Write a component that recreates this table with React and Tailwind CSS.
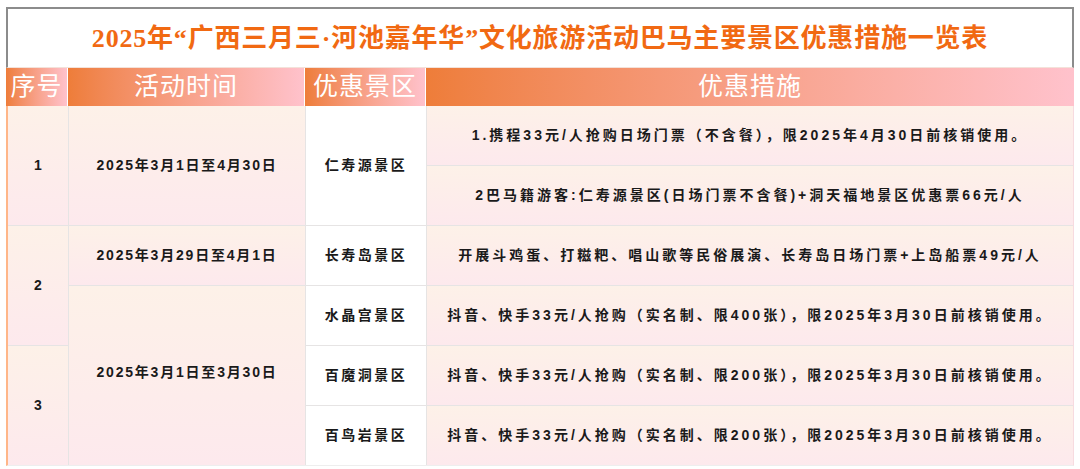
const headers = ["序号", "活动时间", "优惠景区", "优惠措施"];

const cellGrad = "bg-gradient-to-b from-[#fdf1e8] to-[#fde9ed]";
const bodyText =
  "flex items-center justify-center text-[14px] font-bold text-[#1a1a1a]";

const offers = [
  { row: "row-start-1", spot: "仁寿源景区", text: "1.携程33元/人抢购日场门票（不含餐），限2025年4月30日前核销使用。", spotRows: "row-span-2" },
  { row: "row-start-2", text: "2巴马籍游客:仁寿源景区(日场门票不含餐)+洞天福地景区优惠票66元/人" },
  { row: "row-start-3", spot: "长寿岛景区", text: "开展斗鸡蛋、打糍粑、唱山歌等民俗展演、长寿岛日场门票+上岛船票49元/人" },
  { row: "row-start-4", spot: "水晶宫景区", text: "抖音、快手33元/人抢购（实名制、限400张），限2025年3月30日前核销使用。" },
  { row: "row-start-5", spot: "百魔洞景区", text: "抖音、快手33元/人抢购（实名制、限200张），限2025年3月30日前核销使用。" },
  { row: "row-start-6", spot: "百鸟岩景区", text: "抖音、快手33元/人抢购（实名制、限200张），限2025年3月30日前核销使用。" },
];

export default function App() {
  return (
    <div
      className="w-[1080px] h-[469px] bg-white pt-[7px] pl-[6px] pr-[6px]"
      style={{ fontFamily: '"Liberation Sans", "Noto Sans CJK SC", sans-serif' }}
    >
      <div className="flex h-[61px] items-center justify-center border-2 border-b border-[#8c8c8c] border-b-[#f3e2da] bg-white">
        <h1
          className="text-[26px] font-bold tracking-[0.8px] text-[#f16912]"
          style={{ fontFamily: '"Liberation Serif", "Noto Sans CJK SC", serif' }}
        >
          2025年“广西三月三·河池嘉年华”文化旅游活动巴马主要景区优惠措施一览表
        </h1>
      </div>

      <div className="grid h-[38px] grid-cols-[61px_236px_120px_1fr] gap-x-px bg-white">
        {headers.map((h) => (
          <div
            key={h}
            className="flex items-center justify-center bg-gradient-to-r from-[#ee7d39] to-[#ffc2cc] text-[25px] tracking-[1px] text-white"
          >
            {h}
          </div>
        ))}
      </div>

      <div className="grid grid-cols-[60px_236px_120px_1fr] grid-rows-[repeat(6,59px)] gap-px border-l-2 border-r border-b border-l-[#ffb688] border-r-[#f7dbe0] border-b-[#eee] bg-[#e6e4e4]">
        <div className={`${cellGrad} ${bodyText} col-start-1 row-start-1 row-span-2`}>1</div>
        <div className={`${cellGrad} ${bodyText} col-start-1 row-start-3 row-span-2`}>2</div>
        <div className={`${cellGrad} ${bodyText} col-start-1 row-start-5 row-span-2`}>3</div>

        <div className={`${cellGrad} ${bodyText} tracking-[1.8px] col-start-2 row-start-1 row-span-2`}>2025年3月1日至4月30日</div>
        <div className={`${cellGrad} ${bodyText} tracking-[1.8px] col-start-2 row-start-3`}>2025年3月29日至4月1日</div>
        <div className={`${cellGrad} ${bodyText} tracking-[1.8px] col-start-2 row-start-4 row-span-3 pb-[6px]`}>2025年3月1日至3月30日</div>

        {offers.map((o) =>
          o.spot ? (
            <div key={o.spot} className={`bg-white ${bodyText} tracking-[2.5px] col-start-3 ${o.row} ${o.spotRows || ""}`}>
              {o.spot}
            </div>
          ) : null
        )}

        {offers.map((o, i) => (
          <div key={i} className={`${cellGrad} ${bodyText} tracking-[3px] col-start-4 ${o.row}`}>
            {o.text}
          </div>
        ))}
      </div>
    </div>
  );
}
